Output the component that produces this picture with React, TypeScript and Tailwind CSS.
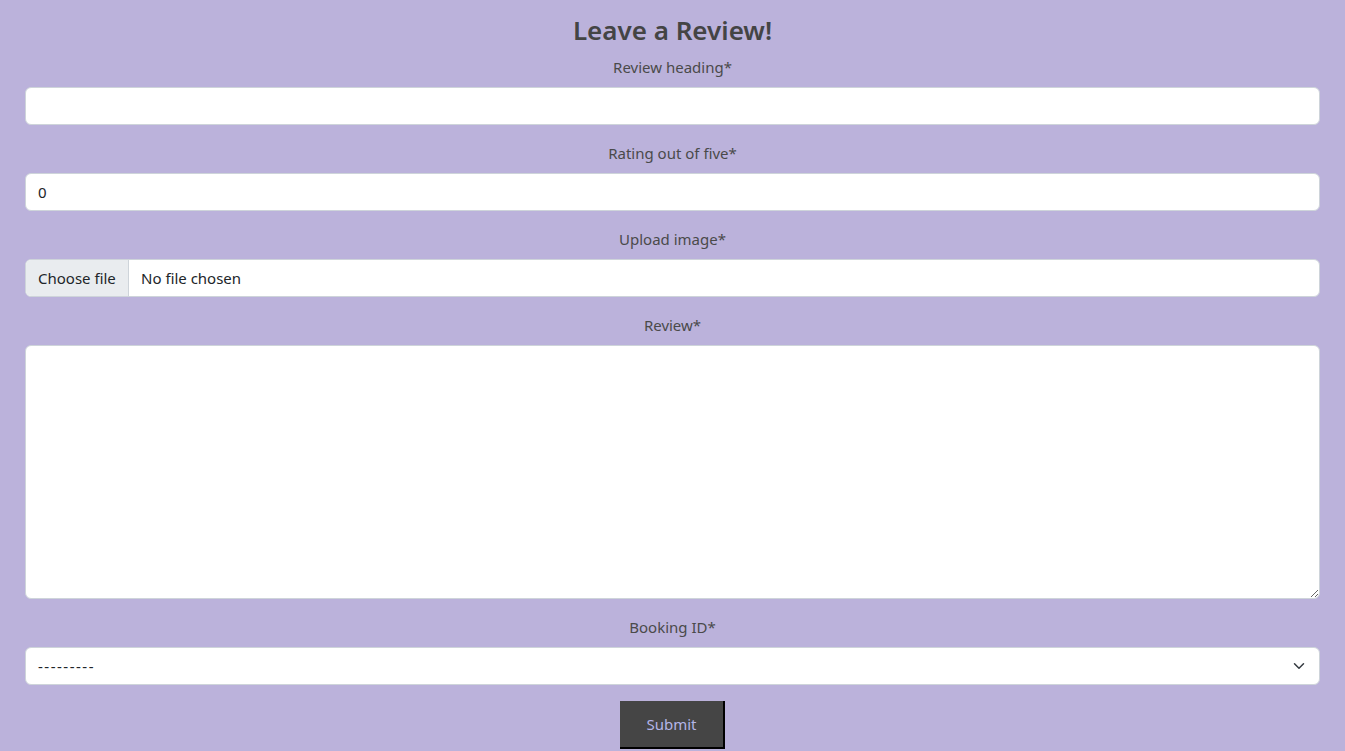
import React from "react";

const font = { fontFamily: '"Noto Sans", "Open Sans", sans-serif' };

function Label({ children }: { children: React.ReactNode }) {
  return <label className="block text-center text-[15px] leading-[24px] mb-2 text-[#4a4a4a]">{children}</label>;
}

export default function App() {
  return (
    <div className="min-h-[751px] bg-[#bbb2db] text-[#444] px-[25px] pt-[13px]" style={font}>
      <h2 className="text-center text-[26px] leading-[34px] font-semibold mb-2 text-[#444]">Leave a Review!</h2>
      <div className="mb-4">
        <Label>Review heading*</Label>
        <input type="text" className="block w-full h-[38px] bg-white border border-[#ced4da] rounded-[6px] px-3 text-[15px] text-[#212529] outline-none" />
      </div>
      <div className="mb-4">
        <Label>Rating out of five*</Label>
        <input type="text" defaultValue="0" className="block w-full h-[38px] bg-white border border-[#ced4da] rounded-[6px] px-3 text-[15px] text-[#212529] outline-none" />
      </div>
      <div className="mb-4">
        <Label>Upload image*</Label>
        <div className="flex w-full h-[38px] bg-white border border-[#ced4da] rounded-[6px] overflow-hidden text-[15px] text-[#212529]">
          <div className="flex items-center w-[103px] shrink-0 px-3 bg-[#e9ecef] border-r border-[#ced4da]">Choose file</div>
          <div className="flex items-center px-3">No file chosen</div>
        </div>
      </div>
      <div className="mb-4">
        <Label>Review*</Label>
        <textarea className="block w-full h-[254px] bg-white border border-[#ced4da] rounded-[6px] px-3 py-1.5 text-[15px] outline-none" />
      </div>
      <div className="mb-4">
        <Label>Booking ID*</Label>
        <div className="relative w-full h-[38px] bg-white border border-[#ced4da] rounded-[6px] flex items-center px-3 text-[15px] text-[#212529]">
          <span className="tracking-[1.5px]">---------</span>
          <svg className="absolute right-[12px] top-[12px]" width="16" height="12" viewBox="0 0 16 16" fill="none">
            <path d="M2 5l6 6 6-6" stroke="#343a40" strokeWidth="2" strokeLinecap="round" strokeLinejoin="round" />
          </svg>
        </div>
      </div>
      <div className="flex justify-center">
        <button className="w-[105px] h-[48px] bg-[#454545] text-[#b3b5e8] text-[15px] border-r-2 border-b-2 border-black">Submit</button>
      </div>
    </div>
  );
}
